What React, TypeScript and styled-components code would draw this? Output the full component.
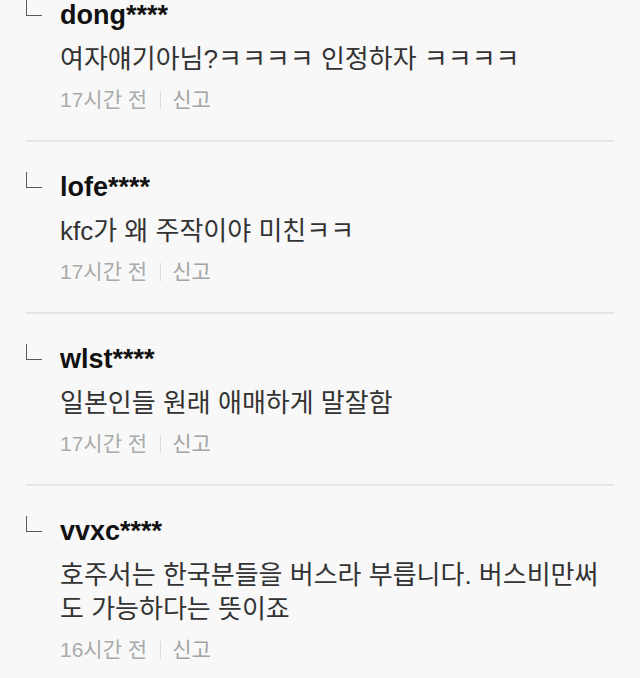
import React from "react";
import styled, { createGlobalStyle } from "styled-components";

type Reply = {
  user: string;
  text: string;
  time: string;
};

const replies: Reply[] = [
  { user: "dong****", text: "여자얘기아님?ㅋㅋㅋㅋ 인정하자 ㅋㅋㅋㅋ", time: "17시간 전" },
  { user: "lofe****", text: "kfc가 왜 주작이야 미친ㅋㅋ", time: "17시간 전" },
  { user: "wlst****", text: "일본인들 원래 애매하게 말잘함", time: "17시간 전" },
  {
    user: "vvxc****",
    text: "호주서는 한국분들을 버스라 부릅니다. 버스비만써도 가능하다는 뜻이죠",
    time: "16시간 전",
  },
];

const GlobalStyle = createGlobalStyle`
  html, body {
    margin: 0;
    padding: 0;
    background: #f8f8f8;
    overflow: hidden;
  }
  body {
    font-family: "Liberation Sans", "Noto Sans CJK KR", sans-serif;
  }
`;

const Page = styled.div`
  width: 640px;
  height: 678px;
  overflow: hidden;
  background: #f8f8f8;
`;

// list is scrolled: the first reply is partly above the top edge
const List = styled.ul`
  list-style: none;
  margin: -30px 0 0;
  padding: 0 26px;
`;

const Item = styled.li<{ $last?: boolean }>`
  display: grid;
  grid-template-columns: 34px 1fr;
  padding: 30px 0 26px;
  border-bottom: ${(p) => (p.$last ? "none" : "2px solid #e6e6e6")};
`;

const ReplyMark = styled.span`
  display: block;
  width: 16px;
  height: 16px;
  box-sizing: border-box;
  border-left: 1.5px solid #5a5a5a;
  border-bottom: 1.5px solid #5a5a5a;
`;

const Body = styled.div`
  display: flex;
  flex-direction: column;
  min-width: 0;
`;

const UserName = styled.div`
  font-family: "Liberation Sans", sans-serif;
  font-weight: 700;
  font-size: 27px;
  line-height: 30px;
  color: #111;
`;

const Text = styled.p`
  margin: 12px 0 0;
  font-size: 26px;
  line-height: 34px;
  color: #333;
`;

const Meta = styled.div`
  display: flex;
  align-items: center;
  margin-top: 10px;
  font-size: 21px;
  line-height: 28px;
  color: #aaa;
`;

const Divider = styled.span`
  width: 1px;
  height: 18px;
  margin: 0 11px 0 13px;
  background: #dcdcdc;
`;

const Report = styled.span`
  color: #a3a3a3;
`;

export default function App() {
  return (
    <Page>
      <GlobalStyle />
      <List>
        {replies.map((r, i) => (
          <Item key={r.user} $last={i === replies.length - 1}>
            <ReplyMark />
            <Body>
              <UserName>{r.user}</UserName>
              <Text>{r.text}</Text>
              <Meta>
                {r.time}
                <Divider />
                <Report>신고</Report>
              </Meta>
            </Body>
          </Item>
        ))}
      </List>
    </Page>
  );
}
